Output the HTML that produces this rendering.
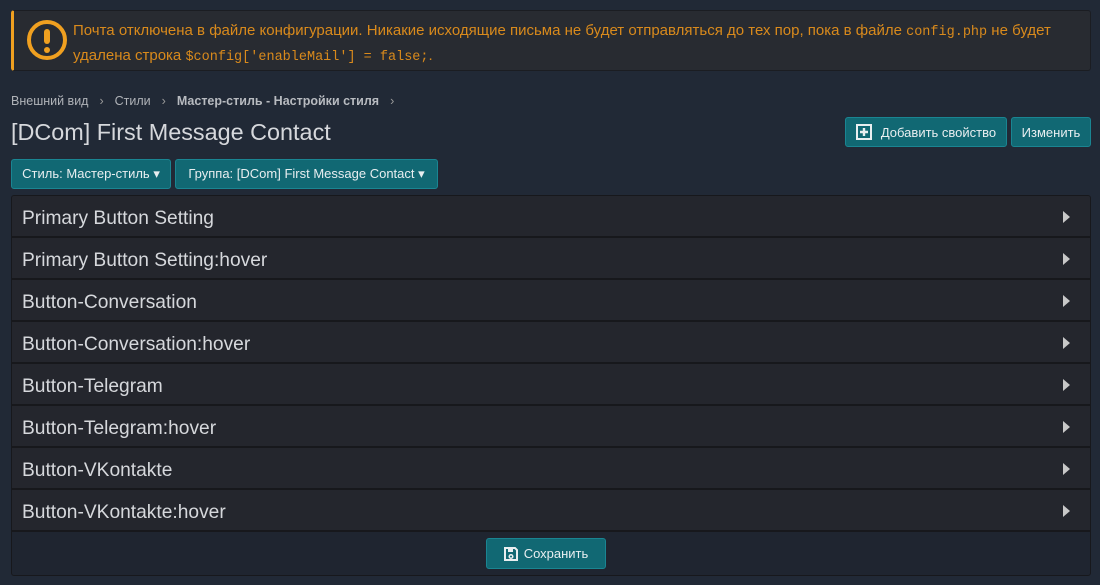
<!DOCTYPE html>
<html><head><meta charset="utf-8"><style>
*{box-sizing:border-box;margin:0;padding:0}
body{width:1100px;height:585px;background:#212936;font-family:"Segoe UI","Liberation Sans","Noto Sans CJK SC",sans-serif;color:#ccc;position:relative;overflow:hidden}
.notice{position:absolute;left:11px;top:10px;width:1080px;height:61px;background:#282b31;border:1px solid #1b1d22;border-left:3px solid #f0a020;border-radius:3px}
.notice .ic{position:absolute;left:13px;top:9px;width:40px;height:40px;border:4px solid #f0a020;border-radius:50%}
.notice .ic:before{content:"";position:absolute;left:13px;top:5px;width:6px;height:15px;background:#f0a020;border-radius:3px}
.notice .ic:after{content:"";position:absolute;left:13px;top:23px;width:6px;height:6px;background:#f0a020;border-radius:50%}
.notice .t{position:absolute;left:59px;top:8px;font-size:15px;line-height:23px;color:#d98a1c;width:1000px}
code{font-family:"Liberation Mono",monospace;font-size:13.5px}
.bc{position:absolute;left:11px;top:94px;font-size:12.5px;color:#b0b3b8}
.bc b{color:#b8bbc0}
.bc span{margin:0 11px;color:#999}
h1{position:absolute;left:11px;top:119px;font-weight:normal;font-size:23.4px;color:#d6d8dc}
.btn{position:absolute;background:#116873;border:1px solid #1a8592;border-radius:3px;color:#e8eef0;font-size:13px;display:flex;align-items:center;justify-content:center}
.block{position:absolute;left:11px;top:195px;width:1080px;height:381px;background:#1f2530;border:1px solid #17181c;border-radius:3px;overflow:hidden}
.row{height:42px;background:#24262d;border-bottom:2px solid #17181c;position:relative;font-size:19.2px;color:#d6d8dc;padding-left:10px;line-height:46px;overflow:hidden}
.row:after{content:"";position:absolute;right:20px;top:15px;border-left:7px solid #c8c8c8;border-top:6px solid transparent;border-bottom:6px solid transparent}
</style></head><body>
<div class="notice"><div class="ic"></div><div class="t">Почта отключена в файле конфигурации. Никакие исходящие письма не будет отправляться до тех пор, пока в файле <code>config.php</code> не будет удалена строка <code>$config['enableMail'] = false;</code>.</div></div>
<div class="bc">Внешний вид<span>›</span>Стили<span>›</span><b>Мастер-стиль - Настройки стиля</b><span>›</span></div>
<h1>[DCom] First Message Contact</h1>
<div class="btn" style="left:845px;top:117px;width:162px;height:30px"><svg width="16" height="16" viewBox="0 0 16 16" style="margin-right:9px"><rect x="1" y="1" width="14" height="14" fill="none" stroke="#e8eef0" stroke-width="2"/><path d="M8 4v8M4 8h8" stroke="#e8eef0" stroke-width="2.4"/></svg>Добавить свойство</div>
<div class="btn" style="left:1011px;top:117px;width:80px;height:30px">Изменить</div>
<div class="btn" style="left:11px;top:159px;width:160px;height:30px">Стиль: Мастер-стиль ▾</div>
<div class="btn" style="left:175px;top:159px;width:263px;height:30px">Группа: [DCom] First Message Contact ▾</div>
<div class="block">
<div class="row">Primary Button Setting</div>
<div class="row">Primary Button Setting:hover</div>
<div class="row">Button-Conversation</div>
<div class="row">Button-Conversation:hover</div>
<div class="row">Button-Telegram</div>
<div class="row">Button-Telegram:hover</div>
<div class="row">Button-VKontakte</div>
<div class="row">Button-VKontakte:hover</div>
</div>
<div class="btn" style="left:486px;top:538px;width:120px;height:31px"><svg width="14" height="14" viewBox="0 0 14 14" style="margin-right:6px"><path d="M1 1h10l2 2v10H1z" fill="none" stroke="#e8eef0" stroke-width="2"/><rect x="4" y="2" width="5" height="3" fill="#e8eef0"/><circle cx="7" cy="9.5" r="1.8" fill="none" stroke="#e8eef0" stroke-width="1.5"/></svg>Сохранить</div>
</body></html>
